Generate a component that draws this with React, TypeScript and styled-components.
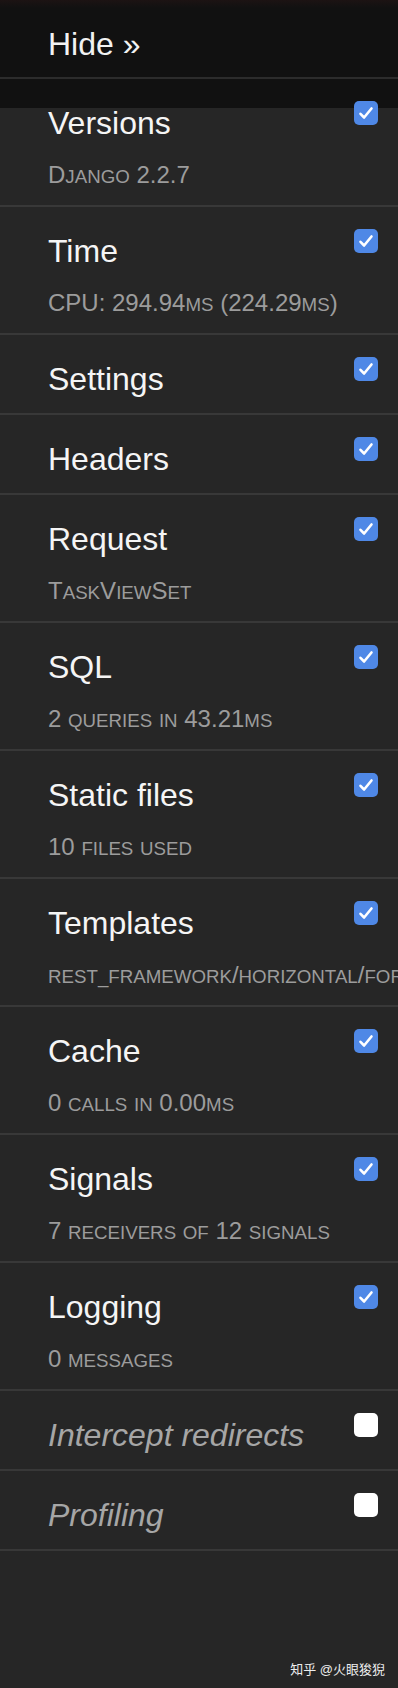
import styled, {createGlobalStyle} from 'styled-components';

const GlobalStyle = createGlobalStyle`
  html, body {
    margin: 0;
    padding: 0;
    background: #262626;
  }
  body {
    font-family: "Liberation Sans", Arial, sans-serif;
    min-height: 1688px;
  }
`;

const Page = styled.div`
  position: relative;
  width: 398px;
  min-height: 1688px;
  background: #262626;
  overflow: hidden;
`;

const Header = styled.div`
  background: linear-gradient(#1c1313 0, #111111 8px);
  border-bottom: 2px solid #2c2c2c;
  padding: 25px 20px 14px 48px;
`;

const HideLink = styled.a`
  display: block;
  color: #f2f2f2;
  font-size: 32px;
  line-height: 38px;
  text-decoration: none;
`;

const List = styled.ul`
  list-style: none;
  margin: 0;
  padding: 0;
  background: linear-gradient(#111111 0 29px, #262626 29px);
`;

const Row = styled.li`
  display: flex;
  justify-content: space-between;
  align-items: flex-start;
  padding: 22px 20px 15px 48px;
  border-bottom: 2px solid #383838;
`;

const Text = styled.div`
  padding-top: 3px;
  min-width: 0;
  flex: 1;
`;

const Title = styled.div<{$disabled?: boolean}>`
  font-size: 32px;
  line-height: 38px;
  color: ${p => (p.$disabled ? '#a6a6a6' : '#f5f5f5')};
  font-style: ${p => (p.$disabled ? 'italic' : 'normal')};
  white-space: nowrap;
`;

const Subtitle = styled.div`
  margin: 18px 0 1px;
  height: 29px;
  font-size: 24px;
  line-height: 29px;
  color: #9c9c9c;
  white-space: nowrap;
`;

// small caps: lowercase runs drawn as smaller capitals
const Sc = styled.span`
  text-transform: uppercase;
  font-size: 0.78em;
  line-height: 1;
`;

const Box = styled.span<{$checked: boolean}>`
  flex: none;
  display: flex;
  align-items: center;
  justify-content: center;
  width: 24px;
  height: 24px;
  border-radius: 5px;
  background: ${p => (p.$checked ? '#4f88e6' : '#ffffff')};
  margin-left: 12px;
  position: relative;
  z-index: 1;
`;

const Watermark = styled.div`
  position: absolute;
  right: 13px;
  bottom: 10px;
  color: #eeeeee;
  font-size: 13px;
  font-family: "Liberation Sans", "Noto Sans CJK SC", sans-serif;
`;

type Panel = {title: string; sub?: string; checked?: boolean};

const panels: Panel[] = [
  {title: 'Versions', sub: 'Django 2.2.7', checked: true},
  {title: 'Time', sub: 'CPU: 294.94ms (224.29ms)', checked: true},
  {title: 'Settings', checked: true},
  {title: 'Headers', checked: true},
  {title: 'Request', sub: 'TaskViewSet', checked: true},
  {title: 'SQL', sub: '2 queries in 43.21ms', checked: true},
  {title: 'Static files', sub: '10 files used', checked: true},
  {title: 'Templates', sub: 'rest_framework/horizontal/form.html', checked: true},
  {title: 'Cache', sub: '0 calls in 0.00ms', checked: true},
  {title: 'Signals', sub: '7 receivers of 12 signals', checked: true},
  {title: 'Logging', sub: '0 messages', checked: true},
  {title: 'Intercept redirects'},
  {title: 'Profiling'},
];

const SmallCaps = ({text}: {text: string}) => {
  const parts = text.split(/([a-z_.]+)/).filter(Boolean);
  return (
    <>
      {parts.map((part, i) => (/^[a-z_.]+$/.test(part) && /[a-z]/.test(part) ? <Sc key={i}>{part}</Sc> : part))}
    </>
  );
};

const Checkbox = ({checked}: {checked: boolean}) => (
  <Box $checked={checked}>
    {checked && (
      <svg width="24" height="24" viewBox="0 0 24 24">
        <path d="M6.5 12.8l3.6 3.7 7.4-9" fill="none" stroke="#fff" strokeWidth="2.6" strokeLinecap="round" strokeLinejoin="round" />
      </svg>
    )}
  </Box>
);

const App = () => {
  return (
    <Page>
      <GlobalStyle />
      <Header>
        <HideLink href="#">Hide »</HideLink>
      </Header>
      <List>
        {panels.map(p => (
          <Row key={p.title}>
            <Text>
              <Title $disabled={!p.checked}>{p.title}</Title>
              {p.sub && (
                <Subtitle>
                  <SmallCaps text={p.sub} />
                </Subtitle>
              )}
            </Text>
            <Checkbox checked={!!p.checked} />
          </Row>
        ))}
      </List>
      <Watermark>知乎 @火眼狻猊</Watermark>
    </Page>
  );
};

export default App;
